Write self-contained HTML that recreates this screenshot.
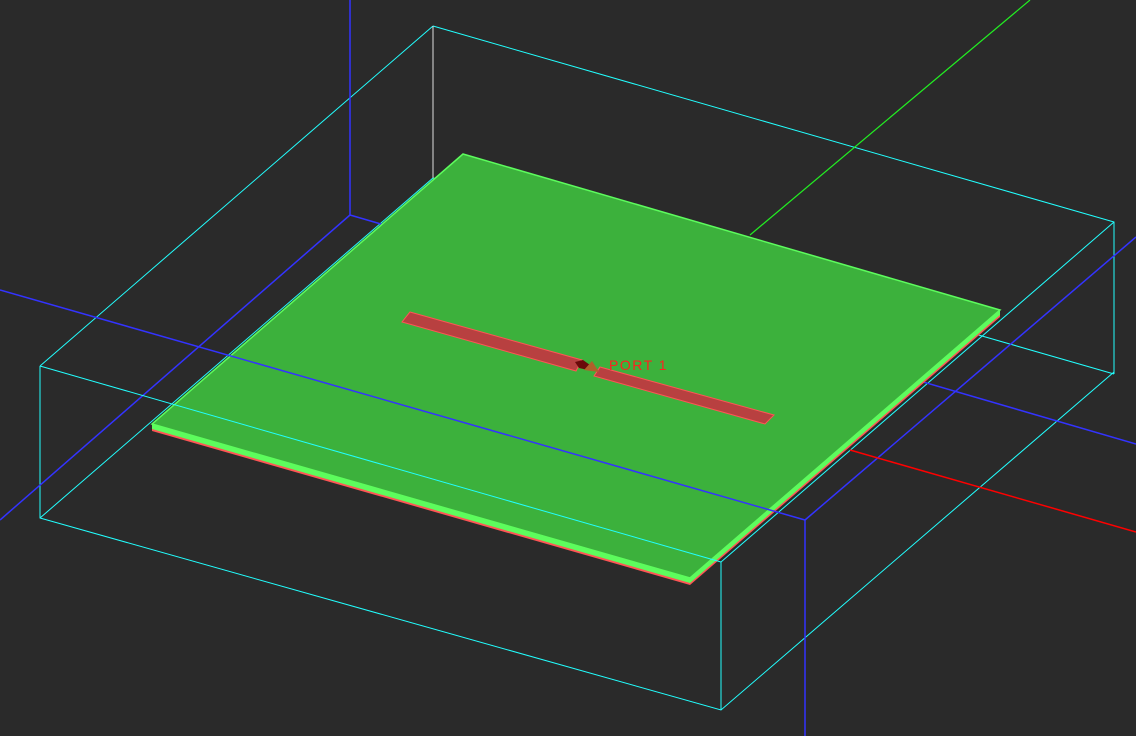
<!DOCTYPE html>
<html><head><style>html,body{margin:0;padding:0;background:#2a2a2a;width:1136px;height:736px;overflow:hidden}</style></head>
<body>
<svg width="1136" height="736" viewBox="0 0 1136 736" xmlns="http://www.w3.org/2000/svg" style="display:block">
<rect width="1136" height="736" fill="#2a2a2a"/>
<g stroke="#2ff" stroke-width="1" fill="none">
<polyline points="433,178 1114,374"/>
<polyline points="40,518 433,178"/>
<polyline points="433,26 1114,222 1114,374"/>
<polyline points="40,366 433,26"/>
<polyline points="40,366 40,518 721,710 1114,372"/>
<polyline points="721,562 721,710"/>
<polyline points="721,562 1114,222"/>
</g>
<line x1="433" y1="26" x2="433" y2="178" stroke="#ddd"/>
<g stroke="#3333ff" stroke-width="1.5" fill="none">
<line x1="350" y1="0" x2="350" y2="215"/>
<line x1="0" y1="520" x2="350" y2="215"/>
<line x1="350" y1="215" x2="1136" y2="444"/>
<line x1="805" y1="520" x2="1136" y2="237"/>
</g>
<line x1="750" y1="235" x2="1030" y2="0" stroke="#2e2" stroke-width="1.2"/>
<line x1="850" y1="450" x2="1136" y2="532" stroke="#f00" stroke-width="1.5"/>
<!-- board -->
<polygon points="152,424 690,578 690,585 152,431" fill="#ff5555"/>
<polygon points="690,578 1000,310 1000,317 690,585" fill="#ff5555"/>
<polygon points="152,424 690,578 690,583 152,429" fill="#5dfc5d"/>
<polygon points="690,578 1000,310 1000,315 690,583" fill="#5dfc5d"/>
<polygon points="463,154 1000,310 690,578 152,424" fill="#3cb13c" stroke="#5dfc5d" stroke-width="1.5"/>
<!-- strip -->
<polygon points="410,312 582,360 576,371 402,322" fill="#b84040" stroke="#ff5555" stroke-width="1"/>
<polygon points="600,367 774,415 765,424 594,376" fill="#b84040" stroke="#ff5555" stroke-width="1"/>
<path d="M575,362 L583,360 L590,365 L588,370 L579,368 Z" fill="#6a0a0a"/>
<path d="M584,370 L592,361 L599,372 Z" fill="#b0602a"/>
<text x="609" y="370" font-family="Liberation Sans, sans-serif" font-size="14" fill="#ff2020" letter-spacing="1.5">PORT 1</text>
<g stroke="#2ff" stroke-width="1" fill="none">
<line x1="40" y1="366" x2="721" y2="562"/>
</g>
<g stroke="#3333ff" stroke-width="1.5" fill="none">
<line x1="0" y1="290" x2="805" y2="520"/>
<line x1="805" y1="520" x2="805" y2="736"/>
</g>
</svg>
</body></html>
